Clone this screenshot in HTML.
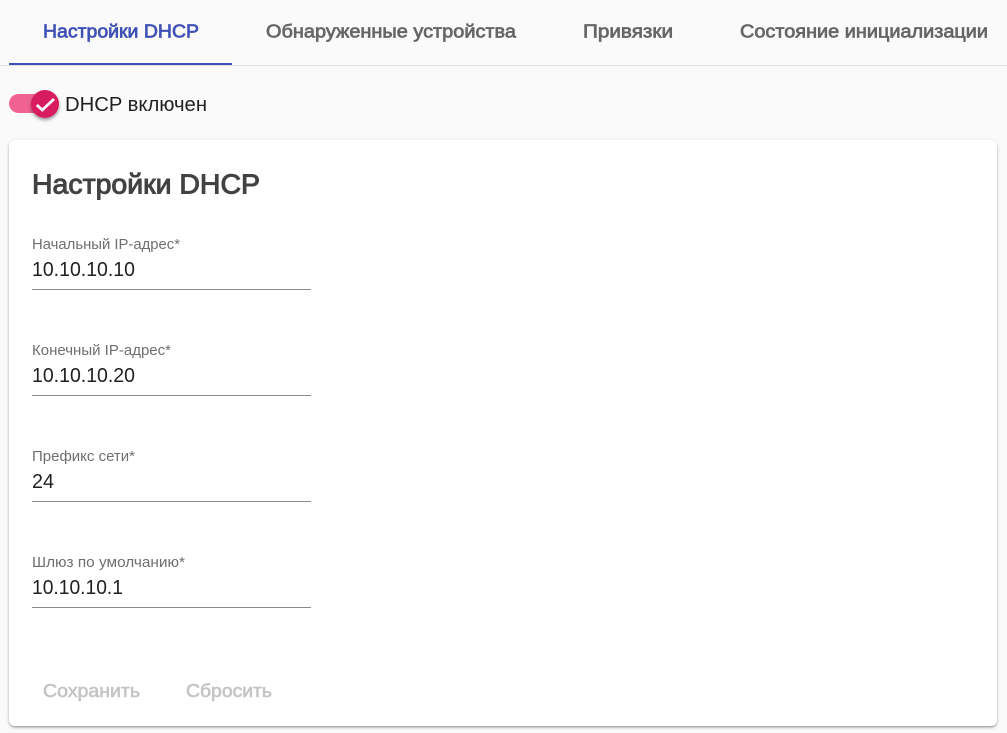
<!DOCTYPE html>
<html lang="ru">
<head>
<meta charset="utf-8">
<title>Настройки DHCP</title>
<style>
html,body{margin:0;padding:0;width:1007px;height:733px;overflow:hidden;background:#fafafa;}
.card{position:absolute;left:9px;top:140px;width:988px;height:586px;background:#fff;border-radius:6px;box-shadow:0 1px 3px rgba(0,0,0,.2),0 2px 2px rgba(0,0,0,.14),0 3px 1px -2px rgba(0,0,0,.12);}
svg{position:absolute;left:0;top:0;}
text{font-family:"Liberation Sans",sans-serif;}
.tab{font-size:18.5px;fill:#666;stroke:#666;stroke-width:.7px;}
.lab{font-size:14.5px;fill:#6f6f6f;}
.val{font-size:20.5px;fill:#212121;}
.btn{font-size:18.5px;fill:#c4c4c4;stroke:#c4c4c4;stroke-width:.6px;}
</style>
</head>
<body>
<div class="card"></div>
<svg width="1007" height="733" viewBox="0 0 1007 733" xmlns="http://www.w3.org/2000/svg">
<defs>
<filter id="s" x="-40%" y="-40%" width="180%" height="180%"><feDropShadow dx="0" dy="2" stdDeviation="1.6" flood-color="#000" flood-opacity=".4"/></filter>
</defs>
<rect x="0" y="65" width="1007" height="1" fill="#e0e0e0"/>
<rect x="9" y="63" width="223" height="2" fill="#3f51b5"/>
<text class="tab" x="43" y="37.5" textLength="156" lengthAdjust="spacingAndGlyphs" style="fill:#3f51b5;stroke:#3f51b5">Настройки DHCP</text>
<text class="tab" x="266" y="37.5" textLength="250" lengthAdjust="spacingAndGlyphs">Обнаруженные устройства</text>
<text class="tab" x="583" y="37.5" textLength="90" lengthAdjust="spacingAndGlyphs">Привязки</text>
<text class="tab" x="740" y="37.5" textLength="248" lengthAdjust="spacingAndGlyphs">Состояние инициализации</text>

<rect x="9" y="94" width="40" height="19" rx="9.5" fill="#f06292"/>
<circle cx="45" cy="104" r="14" fill="#d81b60" filter="url(#s)"/>
<path d="M36.8 105 L42.3 110 L54 99" fill="none" stroke="#fff" stroke-width="2.8"/>
<text x="65" y="111" font-size="20.5" fill="#212121" textLength="142" lengthAdjust="spacingAndGlyphs">DHCP включен</text>

<text x="32" y="193.5" font-size="28" fill="#424242" stroke="#424242" stroke-width="1" textLength="228" lengthAdjust="spacingAndGlyphs">Настройки DHCP</text>

<text class="lab" x="32" y="249" textLength="148" lengthAdjust="spacingAndGlyphs">Начальный IP-адрес*</text>
<text class="val" x="32" y="276" textLength="103" lengthAdjust="spacingAndGlyphs">10.10.10.10</text>
<rect x="32" y="289" width="279" height="1" fill="#8c8c8c"/>

<text class="lab" x="32" y="355" textLength="139" lengthAdjust="spacingAndGlyphs">Конечный IP-адрес*</text>
<text class="val" x="32" y="382" textLength="103" lengthAdjust="spacingAndGlyphs">10.10.10.20</text>
<rect x="32" y="395" width="279" height="1" fill="#8c8c8c"/>

<text class="lab" x="32" y="461" textLength="103" lengthAdjust="spacingAndGlyphs">Префикс сети*</text>
<text class="val" x="32" y="488" textLength="22" lengthAdjust="spacingAndGlyphs">24</text>
<rect x="32" y="501" width="279" height="1" fill="#8c8c8c"/>

<text class="lab" x="32" y="567" textLength="153" lengthAdjust="spacingAndGlyphs">Шлюз по умолчанию*</text>
<text class="val" x="32" y="594" textLength="91" lengthAdjust="spacingAndGlyphs">10.10.10.1</text>
<rect x="32" y="607" width="279" height="1" fill="#8c8c8c"/>

<text class="btn" x="43" y="697" textLength="97" lengthAdjust="spacingAndGlyphs">Сохранить</text>
<text class="btn" x="186" y="697" textLength="86" lengthAdjust="spacingAndGlyphs">Сбросить</text>
</svg>
</body>
</html>
